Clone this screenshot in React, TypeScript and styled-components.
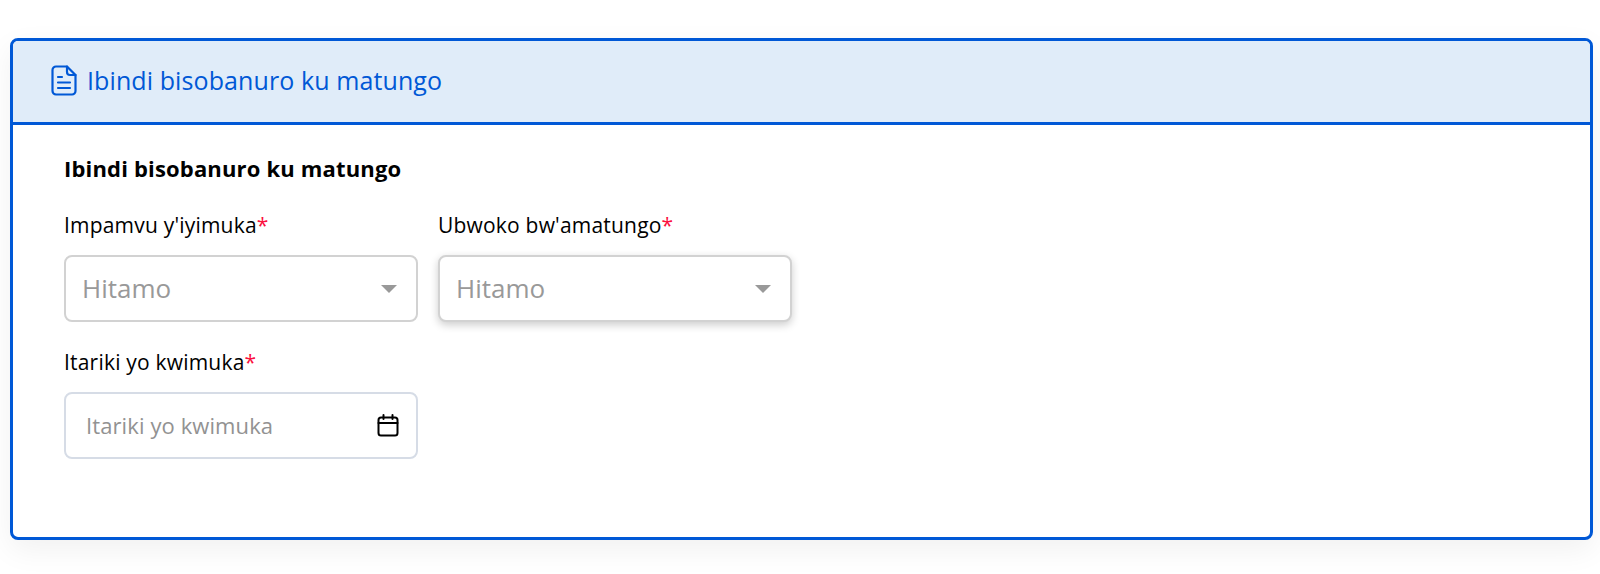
import React from "react";
import styled, { createGlobalStyle } from "styled-components";

const Global = createGlobalStyle`
  html, body { margin: 0; padding: 0; background: #fff; }
  body { font-family: "Open Sans", "Lato", sans-serif; color: #000; }
`;
const Page = styled.div`
  height: 574px;
  box-sizing: border-box;
  padding: 38px 7px 0 10px;
  overflow: hidden;
`;
const Card = styled.section`
  height: 502px;
  box-sizing: border-box;
  border: 3px solid #0058d6;
  border-radius: 8px;
  background: #fff;
  box-shadow: 0 10px 30px rgba(0, 0, 0, 0.06);
  overflow: hidden;
`;
const CardHeader = styled.header`
  height: 84px;
  box-sizing: border-box;
  border-bottom: 3px solid #0058d6;
  background: #e0ecf9;
  color: #0058d6;
  display: flex;
  align-items: center;
  gap: 10px;
  padding: 0 0 2px 38px;
  font-size: 25px;
  letter-spacing: 0.1px;
`;
const HeaderText = styled.span`
  margin-bottom: 2px;
`;
const Body = styled.div`
  padding: 29px 51px 0;
`;
const Title = styled.h2`
  margin: 0 0 30px;
  font-size: 22px;
  line-height: 28px;
  font-weight: 700;
  letter-spacing: 0.17px;
`;
const Row = styled.div`
  display: flex;
  gap: 20px;
  margin-bottom: 27px;
`;
const Field = styled.div`
  width: 354px;
`;
const Label = styled.label`
  display: block;
  font-size: 21px;
  line-height: 26px;
  letter-spacing: 0.2px;
  margin-bottom: 17px;
`;
const Star = styled.span`
  color: #fb0f3e;
`;
const Control = styled.div<{ $raised?: boolean; $date?: boolean }>`
  height: 67px;
  box-sizing: border-box;
  display: flex;
  align-items: center;
  justify-content: space-between;
  background: #fff;
  border: 2px solid ${(p) => (p.$date ? "#d6dce6" : "#d2d2d2")};
  border-radius: 8px;
  padding: ${(p) => (p.$date ? "0 17px 0 20px" : "0 19px 0 16px")};
  box-shadow: ${(p) => (p.$raised ? "0 3px 8px rgba(0, 0, 0, 0.2)" : "none")};
`;
const SelectText = styled.span`
  color: #999;
  font-size: 26px;
  margin-bottom: 2px;
`;
const DateText = styled.span`
  color: #929292;
  font-size: 22px;
  letter-spacing: 0.1px;
  margin-bottom: 2px;
`;
const Caret = styled.span`
  width: 0;
  height: 0;
  border-left: 8px solid transparent;
  border-right: 8px solid transparent;
  border-top: 8px solid #999;
`;

const DocIcon = () => (
  <svg width="26" height="31" viewBox="0 0 26 31" fill="none" stroke="#0058d6" strokeWidth="2.2" strokeLinejoin="round" strokeLinecap="round">
    <path d="M5 1.5h11l8.5 8.5v16a3.5 3.5 0 0 1-3.5 3.5H5A3.5 3.5 0 0 1 1.5 26V5A3.5 3.5 0 0 1 5 1.5Z" />
    <path d="M16 1.5V7a3 3 0 0 0 3 3h5.5" />
    <path d="M7 12h4M7 17.5h12M7 23h12" />
  </svg>
);
const CalendarIcon = () => (
  <svg width="22" height="23" viewBox="0 0 22 23" fill="none" stroke="#000" strokeWidth="2" strokeLinecap="round" strokeLinejoin="round">
    <rect x="1.5" y="3.5" width="19" height="18" rx="2.5" />
    <path d="M1.5 9h19M6.5 1v4M15.5 1v4" />
  </svg>
);

export default function App() {
  return (
    <Page>
      <Global />
      <Card>
        <CardHeader>
          <DocIcon />
          <HeaderText>Ibindi bisobanuro ku matungo</HeaderText>
        </CardHeader>
        <Body>
          <Title>Ibindi bisobanuro ku matungo</Title>
          <Row>
            <Field>
              <Label>Impamvu y'iyimuka<Star>*</Star></Label>
              <Control><SelectText>Hitamo</SelectText><Caret /></Control>
            </Field>
            <Field>
              <Label>Ubwoko bw'amatungo<Star>*</Star></Label>
              <Control $raised><SelectText>Hitamo</SelectText><Caret /></Control>
            </Field>
          </Row>
          <Row>
            <Field>
              <Label>Itariki yo kwimuka<Star>*</Star></Label>
              <Control $date><DateText>Itariki yo kwimuka</DateText><CalendarIcon /></Control>
            </Field>
          </Row>
        </Body>
      </Card>
    </Page>
  );
}
